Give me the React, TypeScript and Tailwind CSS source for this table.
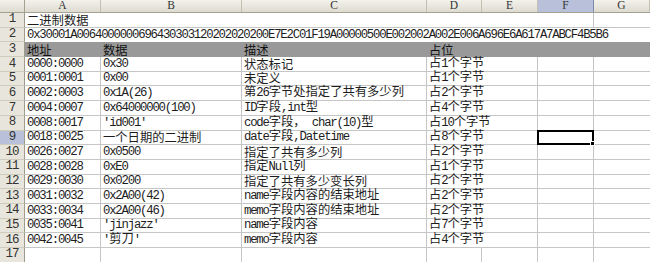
import type { ReactNode } from 'react';

const LINE = 'border-[#c6c6c6]';

const cols = [
    { key: 'A', w: 'w-[76px]' },
    { key: 'B', w: 'w-[141px]' },
    { key: 'C', w: 'w-[185px]' },
    { key: 'D', w: 'w-[55px]' },
    { key: 'E', w: 'w-[56px]' },
    { key: 'F', w: 'w-[56px]' },
    { key: 'G', w: 'flex-1' },
];

const hex =
    '0x30001A0064000000696430303120202020200E7E2C01F19A00000500E002002A002E006A696E6A617A7ABCF4B5B6';

const data = [
    ['0000:0000', '0x30', '状态标记', '占1个字节'],
    ['0001:0001', '0x00', '未定义', '占1个字节'],
    ['0002:0003', '0x1A(26)', '第26字节处指定了共有多少列', '占2个字节'],
    ['0004:0007', '0x64000000(100)', 'ID字段,int型', '占4个字节'],
    ['0008:0017', "'id001'", 'code字段， char(10)型', '占10个字节'],
    ['0018:0025', '一个日期的二进制', 'date字段,Datetime', '占8个字节'],
    ['0026:0027', '0x0500', '指定了共有多少列', '占2个字节'],
    ['0028:0028', '0xE0', '指定Null列', '占1个字节'],
    ['0029:0030', '0x0200', '指定了共有多少变长列', '占2个字节'],
    ['0031:0032', '0x2A00(42)', 'name字段内容的结束地址', '占2个字节'],
    ['0033:0034', '0x2A00(46)', 'memo字段内容的结束地址', '占2个字节'],
    ['0035:0041', "'jinjazz'", 'name字段内容', '占7个字节'],
    ['0042:0045', "'剪刀'", 'memo字段内容', '占4个字节'],
];

const CJK_RE = /([\u3000-\u303f\u4e00-\u9fff\uff00-\uffef]+)/;

// latin runs get the narrow mono face, CJK runs the CJK face
function Txt({ s }: { s: string }) {
    const parts = s.split(CJK_RE).filter(Boolean);
    return (
        <span className="whitespace-pre">
            {parts.map((p, i) =>
                CJK_RE.test(p) ? (
                    <span key={i} className="font-['Noto_Sans_CJK_SC',sans-serif]">{p}</span>
                ) : (
                    <span key={i} className="font-['Liberation_Mono',monospace] tracking-[-1.2px]">{p}</span>
                )
            )}
        </span>
    );
}

function RowHead({ n, active }: { n: number; active?: boolean }) {
    return (
        <div
            className={`w-[25px] shrink-0 flex items-center justify-center border-r border-b border-r-[#9f9c8d] border-b-[#cfccbe] text-[12.5px] text-[#333] font-['Liberation_Mono',monospace] tracking-[-1.1px] ${
                active ? 'bg-[#b9c0d9]' : 'bg-[#e8e6dc]'
            }`}
        >
            {n}
        </div>
    );
}

function Row({ n, active, children }: { n: number; active?: boolean; children?: ReactNode }) {
    return (
        <div className="flex h-[14.7px]">
            <RowHead n={n} active={active} />
            {children}
        </div>
    );
}

function Cell({ w, text, right = true, children }: { w: string; text?: string; right?: boolean; children?: ReactNode }) {
    return (
        <div
            className={`${w} shrink-0 relative flex items-end pl-[2px] border-b ${right ? 'border-r' : ''} ${LINE} leading-[13px]`}
        >
            {text && <Txt s={text} />}
            {children}
        </div>
    );
}

export default function App() {
    return (
        <div className="w-[650px] h-[262px] overflow-hidden bg-white text-[12.3px] text-[#1d1d1d]">
            {/* column headers */}
            <div className="flex h-[13px] border-b border-[#a4a193] bg-gradient-to-b from-[#f3f2ec] to-[#dedbd0]">
                <div className="w-[25px] shrink-0 border-r border-[#a4a193]" />
                {cols.map((c) => (
                    <div
                        key={c.key}
                        className={`${c.w} shrink-0 flex items-center justify-center border-r text-[11.5px] leading-none text-[#333] font-['Liberation_Serif',serif] ${
                            c.key === 'F' ? 'bg-[#b9c0d9] border-[#7d88ad]' : 'border-[#c3c0b1]'
                        }`}
                    >
                        {c.key}
                    </div>
                ))}
            </div>

            <Row n={1}>
                <div className={`w-[569px] shrink-0 flex items-end pl-[2px] border-b border-r ${LINE} leading-[13px]`}>
                    <Txt s="二进制数据" />
                </div>
                <div className={`flex-1 border-b ${LINE}`} />
            </Row>

            <Row n={2}>
                <div className="flex-1 flex items-end pl-[2px] leading-[13px] whitespace-nowrap">
                    <Txt s={hex} />
                </div>
            </Row>

            <Row n={3}>
                <div className="flex-1 flex bg-[#999999] text-[#111]">
                    {['地址', '数据', '描述', '占位'].map((t, i) => (
                        <div key={t} className={`${cols[i].w} shrink-0 flex items-end pl-[2px] leading-[13px]`}>
                            <Txt s={t} />
                        </div>
                    ))}
                </div>
            </Row>

            {data.map((r, i) => {
                const n = i + 4;
                return (
                    <Row key={n} n={n} active={n === 9}>
                        <Cell w={cols[0].w} text={r[0]} />
                        <Cell w={cols[1].w} text={r[1]} />
                        <Cell w={cols[2].w} text={r[2]} />
                        <Cell w={cols[3].w} text={r[3]} right={false} />
                        <Cell w={cols[4].w} />
                        <Cell w={cols[5].w}>
                            {n === 9 && (
                                <div className="absolute z-10 -left-[1px] -top-[1px] -right-[1px] -bottom-[1px] border-[2.5px] border-black">
                                    <div className="absolute -right-[3px] -bottom-[3px] w-[5px] h-[5px] bg-black border border-white" />
                                </div>
                            )}
                        </Cell>
                        <Cell w={cols[6].w} right={false} />
                    </Row>
                );
            })}

            <Row n={17}>
                {cols.map((c) => (
                    <Cell key={c.key} w={c.w} right={c.key !== 'G'} />
                ))}
            </Row>
        </div>
    );
}
